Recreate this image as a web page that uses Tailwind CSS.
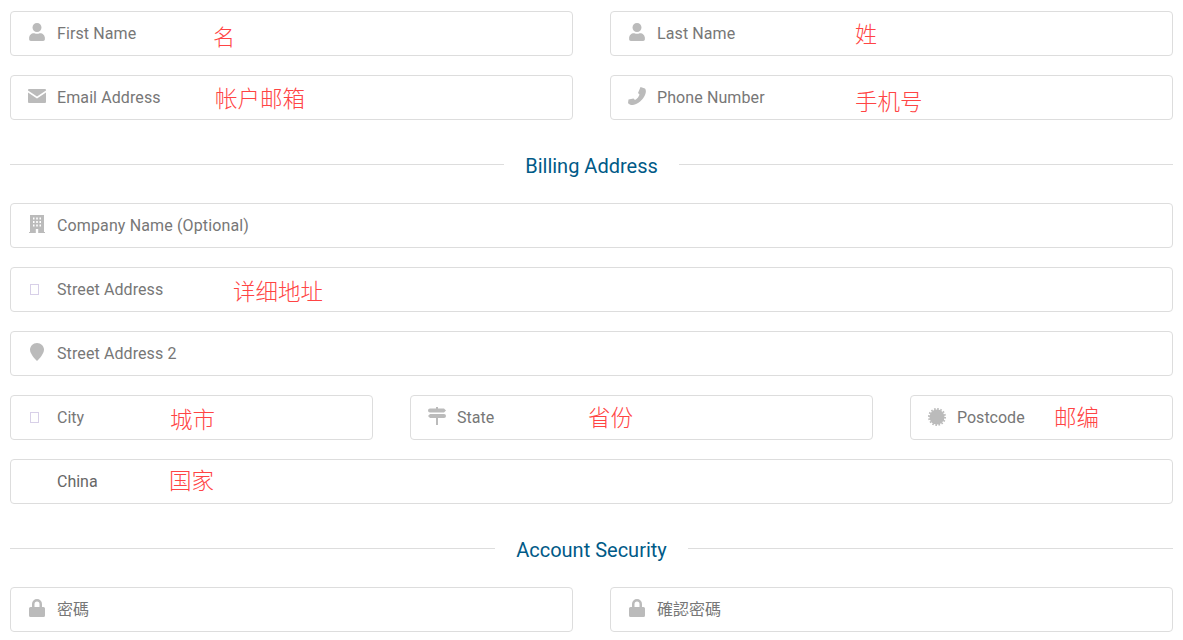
<!DOCTYPE html>
<html lang="en">
<head>
<meta charset="UTF-8">
<title>Billing form</title>
<script src="https://cdn.jsdelivr.net/npm/@tailwindcss/browser@4"></script>
</head>
<body class="bg-white overflow-hidden font-['Roboto','Noto_Sans_CJK_TC',sans-serif] text-[16px] text-[#777]">
<form class="px-[10px] pt-[11px]">

  <!-- name -->
  <div class="grid grid-cols-[563px_563px] gap-x-[37px] mb-[19px]">
    <div class="relative h-[45px] border border-[#ddd] rounded-[4px] flex items-center pl-[17px]">
      <span class="w-[18px] h-[18px] mr-[11px] mb-[3px] flex justify-center">
        <svg width="16" height="18" viewBox="0 0 448 512" fill="#bbb"><path d="M224 256c70.7 0 128-57.3 128-128S294.7 0 224 0 96 57.3 96 128s57.3 128 128 128zm89.6 32h-16.7c-22.2 10.2-46.9 16-72.9 16s-50.6-5.8-72.9-16h-16.7C60.2 288 0 348.2 0 422.4V464c0 26.5 21.5 48 48 48h352c26.5 0 48-21.5 48-48v-41.6c0-74.2-60.2-134.4-134.4-134.4z"/></svg>
      </span>
      <span class="tracking-[0.1px]">First Name</span>
      <span class="absolute left-[202px] top-[7px] text-[22px] leading-[32px] font-light text-[#f44] font-['Noto_Sans_CJK_SC',sans-serif]">名</span>
    </div>
    <div class="relative h-[45px] border border-[#ddd] rounded-[4px] flex items-center pl-[17px]">
      <span class="w-[18px] h-[18px] mr-[11px] mb-[3px] flex justify-center">
        <svg width="16" height="18" viewBox="0 0 448 512" fill="#bbb"><path d="M224 256c70.7 0 128-57.3 128-128S294.7 0 224 0 96 57.3 96 128s57.3 128 128 128zm89.6 32h-16.7c-22.2 10.2-46.9 16-72.9 16s-50.6-5.8-72.9-16h-16.7C60.2 288 0 348.2 0 422.4V464c0 26.5 21.5 48 48 48h352c26.5 0 48-21.5 48-48v-41.6c0-74.2-60.2-134.4-134.4-134.4z"/></svg>
      </span>
      <span class="tracking-[0.1px]">Last Name</span>
      <span class="absolute left-[244px] top-[4px] text-[22px] leading-[32px] font-light text-[#f44] font-['Noto_Sans_CJK_SC',sans-serif]">姓</span>
    </div>
  </div>

  <!-- contact -->
  <div class="grid grid-cols-[563px_563px] gap-x-[37px] mb-[3px]">
    <div class="relative h-[45px] border border-[#ddd] rounded-[4px] flex items-center pl-[17px]">
      <span class="w-[18px] h-[18px] mr-[11px] mb-[3px] flex justify-center items-center">
        <svg width="18" height="14" viewBox="0 0 18 14" fill="#bbb"><path d="M1 0h16a1 1 0 0 1 1 1v.6L9 7.6 0 1.600V1a1 1 0 0 1 1-1z"/><path d="M0 3.600l9 6 9-6V13a1 1 0 0 1-1 1H1a1 1 0 0 1-1-1z"/></svg>
      </span>
      <span class="tracking-[0.1px]">Email Address</span>
      <span class="absolute left-[204px] top-[5px] text-[22.5px] leading-[32px] font-light text-[#f44] font-['Noto_Sans_CJK_SC',sans-serif]">帐户邮箱</span>
    </div>
    <div class="relative h-[45px] border border-[#ddd] rounded-[4px] flex items-center pl-[17px]">
      <span class="w-[18px] h-[18px] mr-[11px] mb-[3px] flex justify-center">
        <svg width="18" height="18" viewBox="0 0 18 18" fill="#bbb"><path d="M12.500 0l4.500 1.500c1.200 1.500 1.200 3.500 0 6.500-2 5-7 9-12 10-2 .3-4-.5-5-2l.5-3.500 5-1 1.500 1.500c2-1 4-3.500 4.500-5.500l-1.500-1.500z"/></svg>
      </span>
      <span class="tracking-[0.1px]">Phone Number</span>
      <span class="absolute left-[244px] top-[8px] text-[22.5px] leading-[32px] font-light text-[#f44] font-['Noto_Sans_CJK_SC',sans-serif]">手机号</span>
    </div>
  </div>

  <!-- billing heading -->
  <div class="flex items-center h-[45px] mt-[22px] mb-[16px]">
    <div class="flex-1 h-px bg-[#ddd]"></div>
    <span class="px-[21px] text-[20px] leading-[28px] text-[#005a87] relative top-[1px]">Billing Address</span>
    <div class="flex-1 h-px bg-[#ddd]"></div>
  </div>

  <div class="relative h-[45px] border border-[#ddd] rounded-[4px] flex items-center pl-[17px] mb-[19px]">
    <span class="w-[18px] h-[18px] mr-[11px] mb-[3px] flex justify-center">
      <svg width="16" height="18" viewBox="0 0 16 18" fill="#bbb"><path fill-rule="evenodd" d="M1 0h14v17h1v1H0v-1h1zM4 2.500v2h1.500v-2zm3.200 0v2h1.600v-2zm3.300 0v2H12v-2zM4 6v2h1.500V6zm3.200 0v2h1.600V6zm3.300 0v2H12V6zM4 9.500v2h1.500v-2zm3.200 0v2h1.600v-2zm3.300 0v2H12v-2zM6.800 14v4h2.400v-4z"/></svg>
    </span>
    <span class="tracking-[0.13px]">Company Name (Optional)</span>
  </div>

  <div class="relative h-[45px] border border-[#ddd] rounded-[4px] flex items-center pl-[17px] mb-[19px]">
    <span class="w-[18px] h-[18px] mr-[11px] pl-[2px] flex items-center">
      <span class="block w-[9px] h-[11px] border border-[#d8d0e8]"></span>
    </span>
    <span class="tracking-[0.1px]">Street Address</span>
    <span class="absolute left-[222px] top-[6px] text-[22.5px] leading-[32px] font-light text-[#f44] font-['Noto_Sans_CJK_SC',sans-serif]">详细地址</span>
  </div>

  <div class="relative h-[45px] border border-[#ddd] rounded-[4px] flex items-center pl-[17px] mb-[19px]">
    <span class="w-[18px] h-[18px] mr-[11px] mb-[3px] flex justify-center">
      <svg width="14" height="18" viewBox="0 0 14 18" fill="#bbb"><path d="M7 0c3.900 0 7 3 7 6.800 0 3.700-4.500 9-7 11.200C4.500 15.800 0 10.500 0 6.800 0 3 3.100 0 7 0z"/></svg>
    </span>
    <span class="tracking-[0.1px]">Street Address 2</span>
  </div>

  <!-- city / state / postcode -->
  <div class="grid grid-cols-[363px_463px_263px] gap-x-[37px] mb-[19px]">
    <div class="relative h-[45px] border border-[#ddd] rounded-[4px] flex items-center pl-[17px]">
      <span class="w-[18px] h-[18px] mr-[11px] pl-[2px] flex items-center">
        <span class="block w-[9px] h-[11px] border border-[#d8d0e8]"></span>
      </span>
      <span>City</span>
      <span class="absolute left-[159px] top-[6px] text-[22.5px] leading-[32px] font-light text-[#f44] font-['Noto_Sans_CJK_SC',sans-serif]">城市</span>
    </div>
    <div class="relative h-[45px] border border-[#ddd] rounded-[4px] flex items-center pl-[17px]">
      <span class="w-[18px] h-[18px] mr-[11px] mb-[3px] flex justify-center">
        <svg width="18" height="18" viewBox="0 0 18 18" fill="#bbb"><path d="M8 0h2v1.500h6l2 2-2 2H2a2 2 0 0 1-2-2 2 2 0 0 1 2-2h6zM2 7h14a2 2 0 0 1 2 2 2 2 0 0 1-2 2H10v7H8v-7H2l-2-2z"/></svg>
      </span>
      <span>State</span>
      <span class="absolute left-[177px] top-[4px] text-[22.5px] leading-[32px] font-light text-[#f44] font-['Noto_Sans_CJK_SC',sans-serif]">省份</span>
    </div>
    <div class="relative h-[45px] border border-[#ddd] rounded-[4px] flex items-center pl-[17px]">
      <span class="w-[18px] h-[18px] mr-[11px] mb-[1px] flex justify-center">
        <svg width="18" height="18" viewBox="0 0 18 18" fill="#bbb"><circle cx="9" cy="9" r="7.500"/><circle cx="9" cy="9" r="8" fill="none" stroke="#bbb" stroke-width="2" stroke-dasharray="1.570 1.570"/></svg>
      </span>
      <span>Postcode</span>
      <span class="absolute left-[143px] top-[4px] text-[22.5px] leading-[32px] font-light text-[#f44] font-['Noto_Sans_CJK_SC',sans-serif]">邮编</span>
    </div>
  </div>

  <div class="relative h-[45px] border border-[#ddd] rounded-[4px] flex items-center pl-[46px] mb-[3px] text-[#666]">
    <span>China</span>
    <span class="absolute left-[158px] top-[3px] text-[22.5px] leading-[32px] font-light text-[#f44] font-['Noto_Sans_CJK_SC',sans-serif]">国家</span>
  </div>

  <!-- security heading -->
  <div class="flex items-center h-[45px] mt-[22px] mb-[16px]">
    <div class="flex-1 h-px bg-[#ddd]"></div>
    <span class="px-[21px] text-[20px] leading-[28px] text-[#005a87] relative top-[1px]">Account Security</span>
    <div class="flex-1 h-px bg-[#ddd]"></div>
  </div>

  <div class="grid grid-cols-[563px_563px] gap-x-[37px]">
    <div class="relative h-[45px] border border-[#ddd] rounded-[4px] flex items-center pl-[17px]">
      <span class="w-[18px] h-[18px] mr-[11px] mb-[3px] flex justify-center">
        <svg width="16" height="18" viewBox="0 0 16 18" fill="#bbb"><path fill-rule="evenodd" d="M3 8V5a5 5 0 0 1 10 0v3h1.500A1.500 1.500 0 0 1 16 9.500v7a1.500 1.500 0 0 1-1.500 1.500h-13A1.500 1.500 0 0 1 0 16.500v-7A1.500 1.500 0 0 1 1.500 8zm2.500 0h5V5a2.500 2.500 0 0 0-5 0z"/></svg>
      </span>
      <span>密碼</span>
    </div>
    <div class="relative h-[45px] border border-[#ddd] rounded-[4px] flex items-center pl-[17px]">
      <span class="w-[18px] h-[18px] mr-[11px] mb-[3px] flex justify-center">
        <svg width="16" height="18" viewBox="0 0 16 18" fill="#bbb"><path fill-rule="evenodd" d="M3 8V5a5 5 0 0 1 10 0v3h1.500A1.500 1.500 0 0 1 16 9.500v7a1.500 1.500 0 0 1-1.500 1.500h-13A1.500 1.500 0 0 1 0 16.500v-7A1.500 1.500 0 0 1 1.500 8zm2.500 0h5V5a2.500 2.500 0 0 0-5 0z"/></svg>
      </span>
      <span>確認密碼</span>
    </div>
  </div>

</form>
</body>
</html>
